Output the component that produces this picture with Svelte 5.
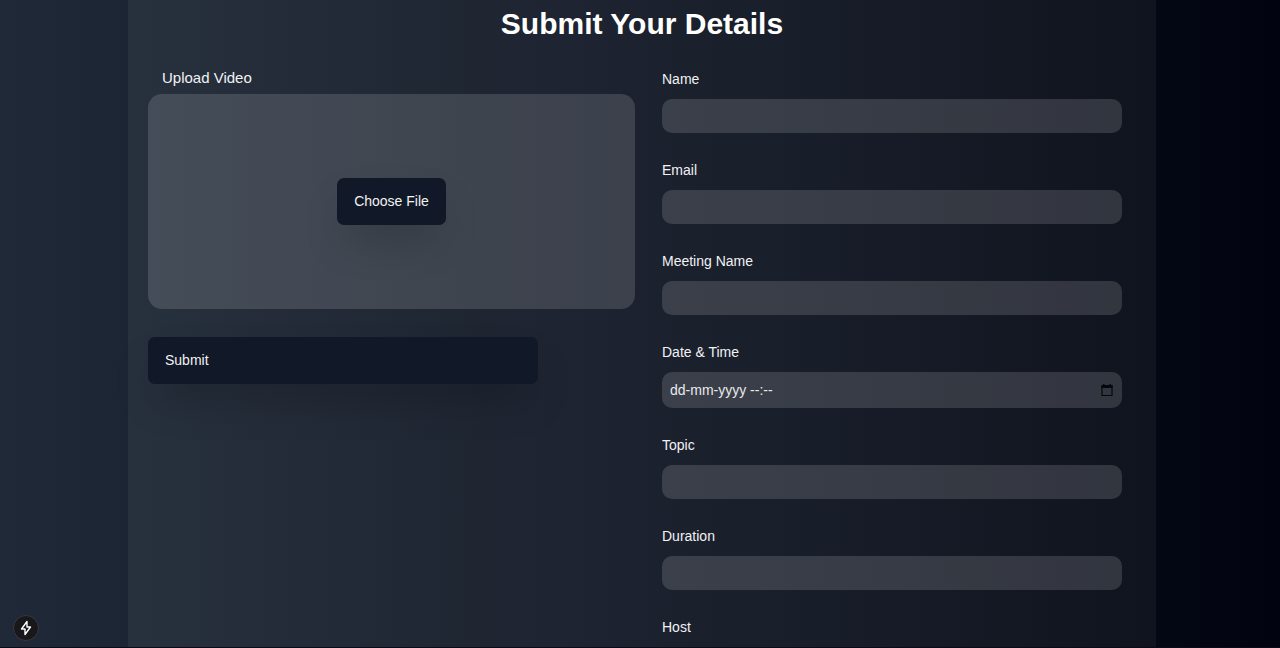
<script>
  const fields = [
    { id: 'name', label: 'Name', type: 'text' },
    { id: 'email', label: 'Email', type: 'email' },
    { id: 'meeting', label: 'Meeting Name', type: 'text' },
    { id: 'date', label: 'Date & Time', type: 'date' },
    { id: 'topic', label: 'Topic', type: 'text' },
    { id: 'duration', label: 'Duration', type: 'text' },
    { id: 'host', label: 'Host', type: 'text' }
  ];
</script>

<div class="page">
  <main>
    <h1>Submit Your Details</h1>
    <form onsubmit={(e) => e.preventDefault()}>
      <section class="upload">
        <h2 id="upload-title">Upload Video</h2>
        <div class="drop">
          <button type="button" class="dark" aria-describedby="upload-title">Choose File</button>
        </div>
        <button type="submit" class="dark submit">Submit</button>
      </section>
      <section class="fields">
        {#each fields as field}
          <div class="field">
            <label for={field.id}>{field.label}</label>
            {#if field.type === 'date'}
              <div class="control date">
                <input id={field.id} type="text" placeholder="dd-mm-yyyy --:--" />
                <button type="button" class="picker" aria-label="Show date picker">
                  <svg width="12" height="14" viewBox="0 0 12 14" aria-hidden="true">
                    <path d="M1 3h10v9.500H1z" fill="none" stroke="#05070c" stroke-width="1.2" />
                    <path d="M.4 2h11.200v3H.4zM2 1h1.500v2H2zM8.500 1H10v2H8.500z" fill="#05070c" />
                  </svg>
                </button>
              </div>
            {:else}
              <div class="control"><input id={field.id} type={field.type} /></div>
            {/if}
          </div>
        {/each}
      </section>
    </form>
  </main>
  <button type="button" class="badge" aria-label="Developer tools">
    <svg width="12" height="16" viewBox="0 0 12 16" aria-hidden="true">
      <path d="M7 1.5 1.5 9H5v5.5L10.5 7H7z" fill="none" stroke="#fff" stroke-width="1.4" stroke-linejoin="round" />
    </svg>
  </button>
</div>

<style>
  :global(body) {
    margin: 0;
    background: #02040d;
  }
  .page {
    height: 100vh;
    overflow: hidden;
    box-sizing: border-box;
    border-bottom: 1px solid #0c0a16;
    background: linear-gradient(to right, #1f2937, #010410);
    color: #f1f2f4;
    font: 14px/20px 'Liberation Sans', Arial, sans-serif;
    display: flex;
  }
  main {
    flex: 1;
    min-width: 0;
    min-height: 100vh;
    margin: 0 124px 0 10%;
    box-sizing: border-box;
    padding: 6px 34px 0 20px;
    background: rgba(255, 255, 255, 0.05);
  }
  h1 {
    margin: 0 -14px 26px 0;
    text-align: center;
    color: #fff;
    font-size: 30px;
    line-height: 36px;
  }
  form {
    display: grid;
    grid-template-columns: 487fr 460fr;
    gap: 27px;
  }
  h2 {
    margin: 0 14px 6px;
    font-size: 15px;
    line-height: 20px;
    font-weight: 400;
  }
  button {
    font: inherit;
    color: inherit;
    border: 0;
    cursor: pointer;
  }
  .drop {
    height: 215px;
    display: flex;
    align-items: center;
    justify-content: center;
    border-radius: 14px;
    background: rgba(255, 255, 255, 0.14);
  }
  .dark {
    height: 47px;
    padding: 0 17px 1px;
    border-radius: 7px;
    background: #111827;
    text-align: left;
    box-shadow: 0 21px 43px -10px rgba(0, 0, 0, 0.25);
  }
  .submit {
    display: block;
    width: 80%;
    margin-top: 28px;
  }
  .fields {
    display: flex;
    flex-direction: column;
    gap: 27px;
    padding-top: 1px;
  }
  .field label {
    display: block;
    margin-bottom: 10px;
  }
  .control {
    display: flex;
    align-items: center;
    height: 34px;
    border-radius: 10px;
    background: rgba(255, 255, 255, 0.14);
  }
  .control.date {
    height: 36px;
  }
  input {
    flex: 1;
    min-width: 0;
    height: 100%;
    box-sizing: border-box;
    padding: 0 8px;
    border: 0;
    outline: 0;
    background: transparent;
    color: inherit;
    font: inherit;
  }
  input::placeholder {
    color: #e8eaed;
    opacity: 1;
  }
  .picker {
    display: flex;
    padding: 0;
    margin-right: 9px;
    background: none;
  }
  .badge {
    position: fixed;
    left: 13px;
    bottom: 7px;
    width: 26px;
    height: 26px;
    padding: 0;
    display: flex;
    align-items: center;
    justify-content: center;
    border: 1px solid #39393d;
    border-radius: 50%;
    background: #18181b;
  }
</style>
